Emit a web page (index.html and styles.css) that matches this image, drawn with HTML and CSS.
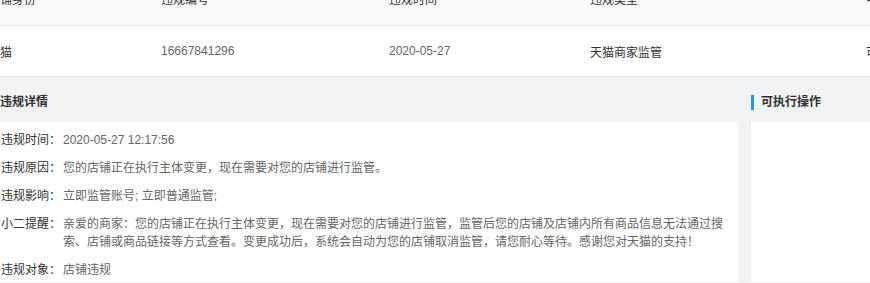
FILE: index.html
```html
<!DOCTYPE html>
<html lang="zh-CN">
<head>
  <meta charset="UTF-8">
  <title>违规详情</title>
  <link rel="stylesheet" href="styles.css">
</head>
<body>
<div class="page">

  <div class="table">
    <div class="tableRow tableHead">
      <span>店铺身份</span>
      <span>违规编号</span>
      <span>违规时间</span>
      <span>违规类型</span>
      <span>申诉状态</span>
    </div>
    <div class="tableRow tableBody">
      <span class="strong">天猫</span>
      <span>16667841296</span>
      <span>2020-05-27</span>
      <span class="strong">天猫商家监管</span>
      <span class="strong">可申诉</span>
    </div>
  </div>

  <div class="panels">
    <div class="detailCol">
      <h2 class="panelTitle">违规详情</h2>
      <div class="panelBody detailList">
        <div class="detailRow">
          <span class="detailLabel">违规时间：</span>
          <span class="detailValue">2020-05-27 12:17:56</span>
        </div>
        <div class="detailRow">
          <span class="detailLabel">违规原因：</span>
          <span class="detailValue">您的店铺正在执行主体变更，现在需要对您的店铺进行监管。</span>
        </div>
        <div class="detailRow">
          <span class="detailLabel">违规影响：</span>
          <span class="detailValue">立即监管账号; 立即普通监管;</span>
        </div>
        <div class="detailRow">
          <span class="detailLabel">小二提醒：</span>
          <span class="detailValue">亲爱的商家：您的店铺正在执行主体变更，现在需要对您的店铺进行监管，监管后您的店铺及店铺内所有商品信息无法通过搜索、店铺或商品链接等方式查看。变更成功后，系统会自动为您的店铺取消监管，请您耐心等待。感谢您对天猫的支持！</span>
        </div>
        <div class="detailRow">
          <span class="detailLabel">违规对象：</span>
          <span class="detailValue">店铺违规</span>
        </div>
      </div>
    </div>

    <div class="actionCol">
      <h2 class="panelTitle marked">可执行操作</h2>
      <div class="panelBody"></div>
    </div>
  </div>

</div>
</body>
</html>
```

FILE: styles.css
```css
html, body {
  margin: 0;
  padding: 0;
}

body {
  background: #f2f3f5;
  font-family: "Liberation Sans", "Noto Sans CJK SC", sans-serif;
  font-size: 12px;
  color: #333;
  overflow: hidden;
  height: 283px;
}

.page {
  width: 870px;
}

.table {
  margin-top: -29px;
  background: #fff;
}

.tableRow {
  display: grid;
  grid-template-columns: 173px 228px 201px 276px 120px;
  margin-left: -12px;
  align-items: center;
  border-bottom: 1px solid #e8e8e8;
  white-space: nowrap;
}

.tableHead {
  height: 54px;
  background: #f9f9f9;
  color: #333;
}

.tableBody {
  height: 50px;
  color: #666;
}

.tableBody .strong {
  color: #333;
}

.panels {
  display: grid;
  grid-template-columns: 738px 1fr;
  column-gap: 13px;
}

.panelTitle {
  margin: 0;
  padding: 18px 0 12px;
  font-size: 12px;
  line-height: 15px;
  font-weight: bold;
  color: #333;
}

.panelTitle.marked {
  display: flex;
  align-items: center;
}

.panelTitle.marked::before {
  content: "";
  width: 3px;
  height: 15px;
  background: #1e97ee;
  margin-right: 7px;
}

.panelBody {
  background: #fff;
  height: 160px;
}

.detailList {
  padding: 9px 10px 0 1px;
  box-sizing: border-box;
}

.detailRow {
  display: flex;
  line-height: 18px;
  margin-bottom: 10px;
}

.detailLabel {
  flex: none;
  width: 62px;
  color: #333;
}

.detailValue {
  flex: 1;
  color: #666;
}
```
